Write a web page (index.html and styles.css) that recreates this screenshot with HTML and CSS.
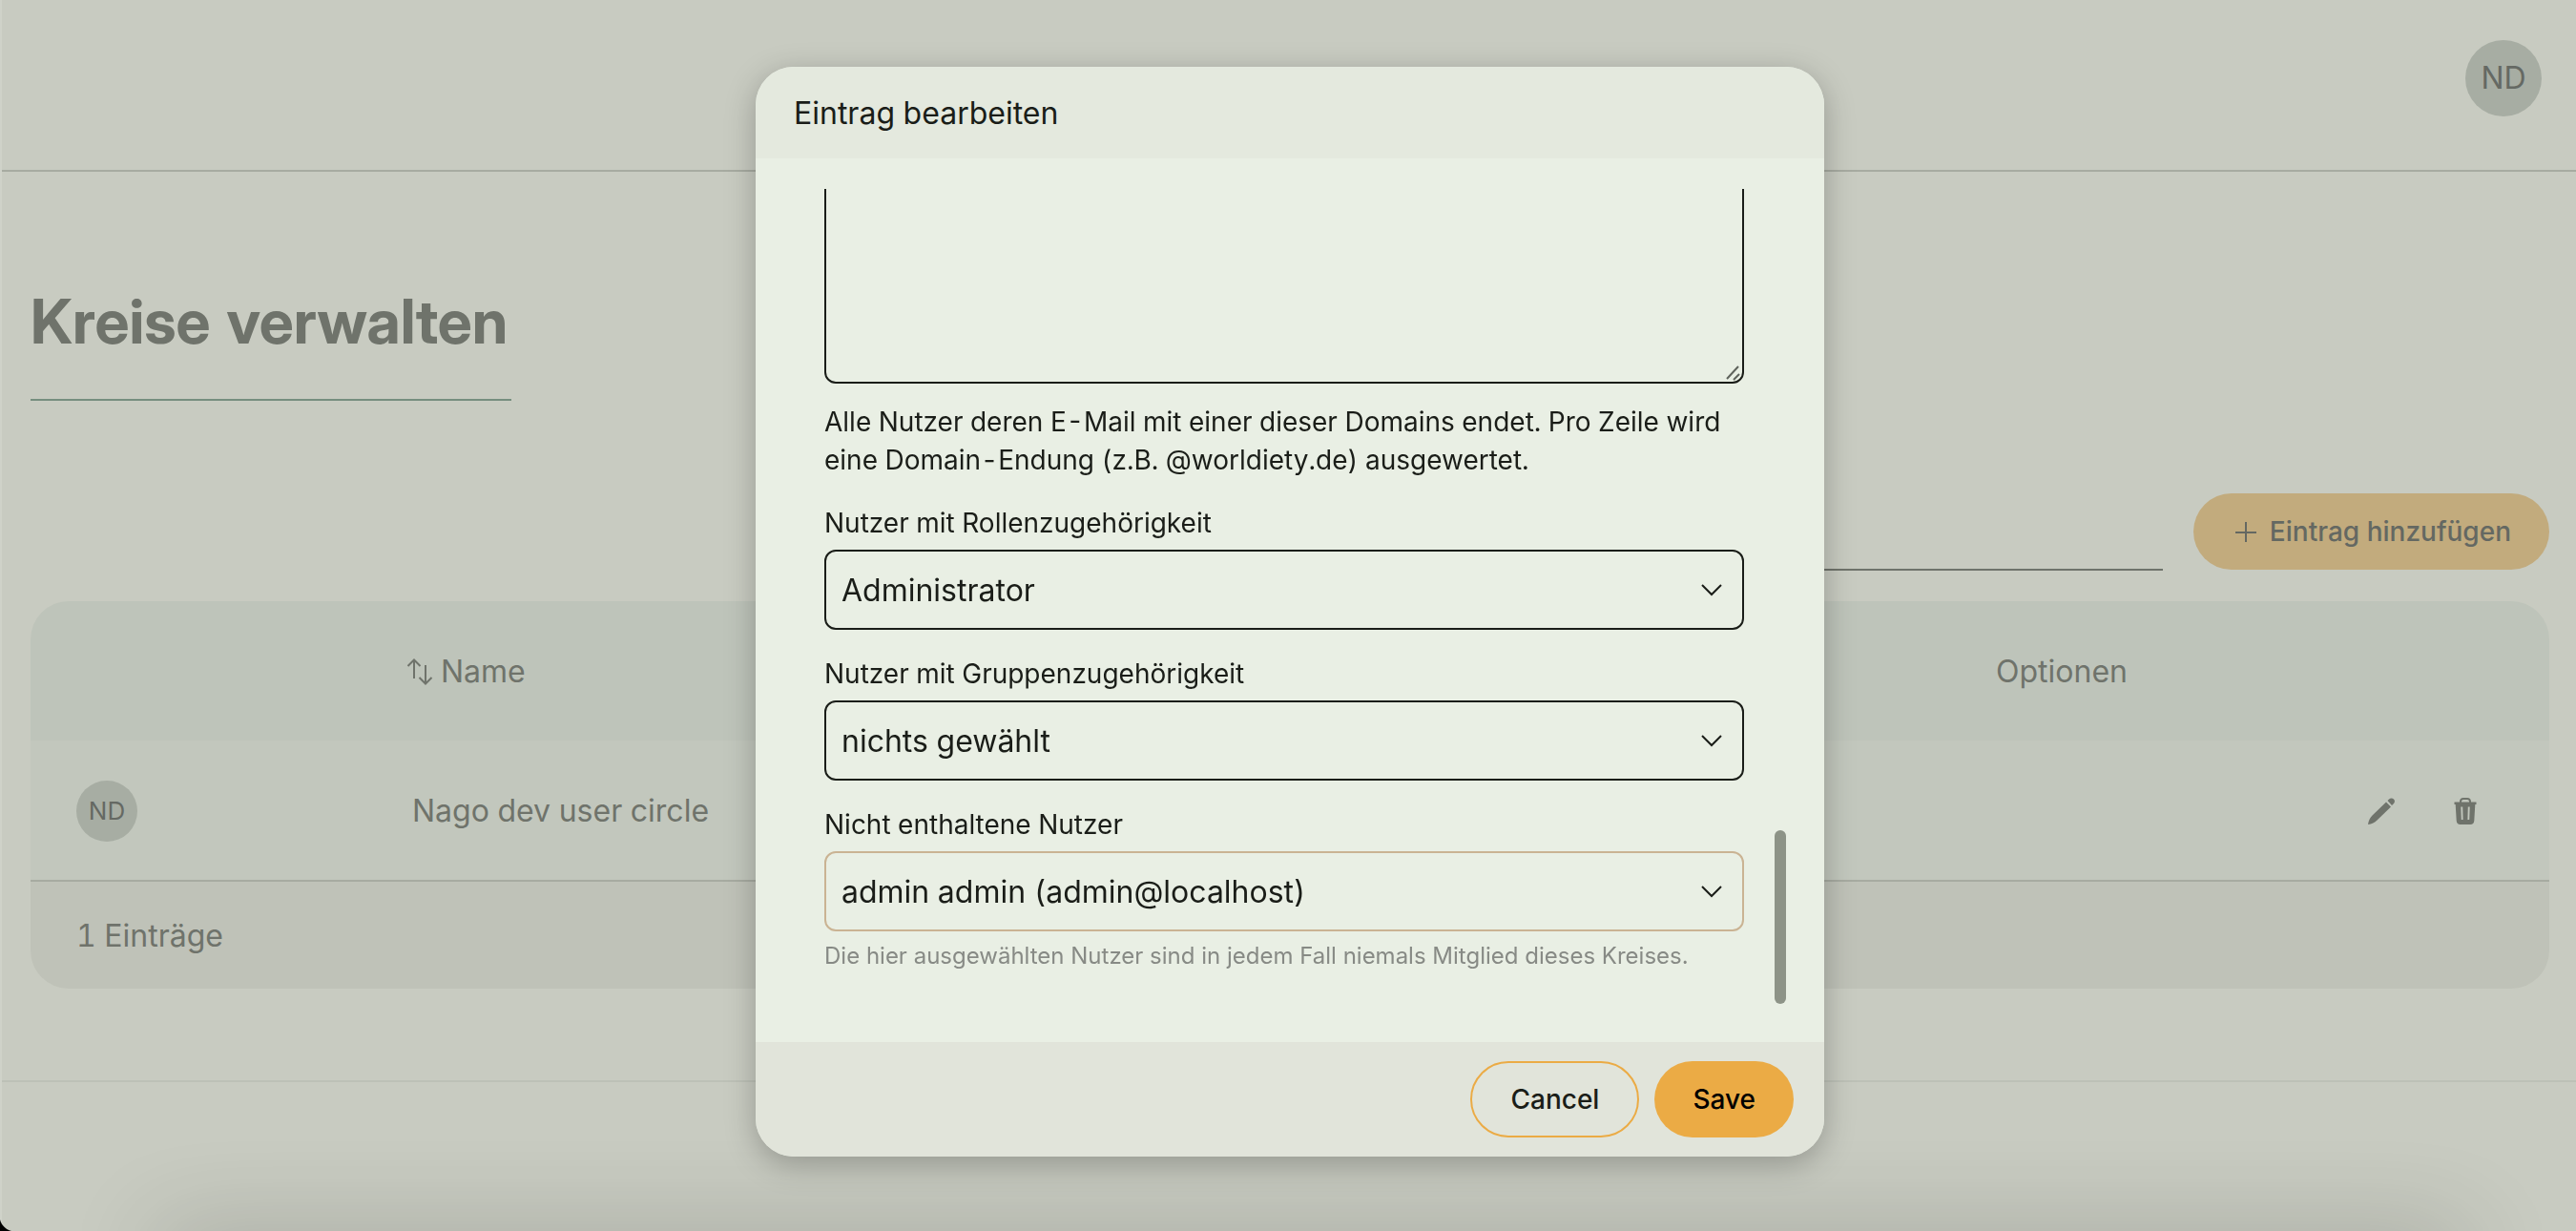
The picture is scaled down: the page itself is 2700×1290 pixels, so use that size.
FILE: index.html
```html
<!DOCTYPE html>
<html lang="de">
<head>
<meta charset="utf-8">
<title>Kreise verwalten</title>
<link rel="stylesheet" href="styles.css">
</head>
<body>
<div class="app">
  <header class="topbar">
    <button class="avatar avatar-large" type="button">ND</button>
  </header>

  <main class="content">
    <h1 class="page-title">Kreise verwalten</h1>

    <div class="toolbar">
      <input class="search" type="search" aria-label="Suchen">
      <button class="button button-add" type="button">
        <svg class="icon-plus" viewBox="0 0 28 28" aria-hidden="true"><path d="M15 4v21M4 15h22"/></svg>
        Eintrag hinzufügen
      </button>
    </div>

    <table class="entries">
      <colgroup><col class="col-avatar"><col class="col-name"><col class="col-options"></colgroup>
      <thead>
        <tr>
          <th></th>
          <th>
            <button class="sort" type="button">
              <svg class="icon-sort" viewBox="0 0 28 28" aria-hidden="true"><path d="M8 21V2M1.500 8L8 1.500L14.500 8M20 7v19M13.500 20L20 26.500L26.500 20"/></svg>
              Name
            </button>
          </th>
          <th>Optionen</th>
        </tr>
      </thead>
      <tbody>
        <tr>
          <td><span class="avatar avatar-small">ND</span></td>
          <td>Nago dev user circle</td>
          <td>
            <div class="row-actions">
              <button class="icon-button" type="button" aria-label="Bearbeiten">
                <svg class="icon-action" viewBox="0 0 28 28" aria-hidden="true"><path d="M19 4.500L24 9.500L9.500 23.500C7 26 4 27.500 0 28C.5 24 2 21 4.500 18.500ZM20.500 3L22 1.500C23.500 0 25.500 0 27 1.500S28 5 27 6L25 8Z"/></svg>
              </button>
              <button class="icon-button" type="button" aria-label="Löschen">
                <svg class="icon-action" viewBox="0 0 28 28" aria-hidden="true"><path fill-rule="evenodd" d="M8 4.500V4C8 1.500 9.500 0 12 0h4c2.500 0 4 1.500 4 4v.5h5.500v2.500H24.300L23.300 24c-.2 2.500-1.600 4-4 4H8.700c-2.400 0-3.800-1.500-4-4L3.700 7H2.500V4.500ZM10 4.500h8C18 2.700 17.200 2 16 2h-4c-1.200 0-2 .7-2 2.500ZM9.300 9.500l.5 13.500h1.800l-.4-13.500ZM16.800 9.500l-.4 13.500h1.800l.5-13.500Z"/></svg>
              </button>
            </div>
          </td>
        </tr>
      </tbody>
      <tfoot>
        <tr><td colspan="3">1 Einträge</td></tr>
      </tfoot>
    </table>
  </main>
  <footer class="page-footer"></footer>
</div>

<div class="edge-shade"></div>
<div class="window-corner"></div>

<div class="overlay">
  <section class="dialog" role="dialog" aria-modal="true" aria-labelledby="dialog-title">
    <h2 class="dialog-header" id="dialog-title">Eintrag bearbeiten</h2>
    <div class="dialog-body">
      <form class="fields" id="circle-form">
        <div class="field field-domains">
          <div class="picker">
            <textarea class="control domains" aria-describedby="domains-help" aria-label="Domains"></textarea>
            <svg class="grip" viewBox="0 0 16 16" aria-hidden="true"><path d="M1 14L13 1M8 15L14 9"/></svg>
          </div>
          <p class="help-large" id="domains-help">Alle Nutzer deren E-Mail mit einer dieser Domains endet. Pro Zeile wird eine Domain-Endung (z.B. @worldiety.de) ausgewertet.</p>
        </div>
        <div class="field">
          <label class="label" for="roles">Nutzer mit Rollenzugehörigkeit</label>
          <div class="picker">
            <select class="control select" id="roles"><option>Administrator</option></select>
            <svg class="chevron" viewBox="0 0 24 14" aria-hidden="true"><path d="M2 2l10 10L22 2"/></svg>
          </div>
        </div>
        <div class="field">
          <label class="label" for="groups">Nutzer mit Gruppenzugehörigkeit</label>
          <div class="picker">
            <select class="control select" id="groups"><option>nichts gewählt</option></select>
            <svg class="chevron" viewBox="0 0 24 14" aria-hidden="true"><path d="M2 2l10 10L22 2"/></svg>
          </div>
        </div>
        <div class="field">
          <label class="label" for="excluded">Nicht enthaltene Nutzer</label>
          <div class="picker">
            <select class="control select control-hover" id="excluded" aria-describedby="excluded-help"><option>admin admin (admin@localhost)</option></select>
            <svg class="chevron" viewBox="0 0 24 14" aria-hidden="true"><path d="M2 2l10 10L22 2"/></svg>
          </div>
          <p class="help" id="excluded-help">Die hier ausgewählten Nutzer sind in jedem Fall niemals Mitglied dieses Kreises.</p>
        </div>
      </form>
      <div class="scroll-track"><div class="scroll-thumb"></div></div>
    </div>
    <div class="dialog-footer">
      <button class="button button-cancel" type="button">Cancel</button>
      <button class="button button-save" type="submit" form="circle-form">Save</button>
    </div>
  </section>
</div>
</body>
</html>
```

FILE: styles.css
```css
:root {
  --page: #c8cbc1;
  --line: #a7aba1;
  --muted: #6f736b;
  --ink: #1a1d18;
  --amber: #ebab45;
}

* {
  box-sizing: border-box;
}

body {
  margin: 0;
  min-height: 100vh;
  overflow: hidden;
  background: var(--page);
  color: var(--muted);
  font: 400 32px/48px Inter, sans-serif;
  font-variant-numeric: tabular-nums;
}

button,
select,
input,
textarea {
  font: inherit;
  color: inherit;
}

button {
  padding: 0;
  border: 0;
  background: none;
}

svg {
  fill: none;
  stroke: currentColor;
  flex: none;
}

.app {
  min-height: 100vh;
  border-left: 2px solid #cfd2c9;
}

.topbar {
  display: flex;
  align-items: center;
  justify-content: flex-end;
  height: 180px;
  padding: 0 36px 14px;
  border-bottom: 2px solid var(--line);
}

.avatar {
  display: flex;
  align-items: center;
  justify-content: center;
  border-radius: 50%;
  background: #a7ada3;
  color: #656963;
}

.avatar-large {
  width: 80px;
  height: 80px;
}

.avatar-small {
  width: 64px;
  height: 64px;
  font-size: 26px;
}

.content {
  padding: 116px 28px 96px 30px;
}

.page-title {
  width: fit-content;
  margin: 0;
  padding: 0 4px 40px 0;
  border-bottom: 2px solid #768e7f;
  font-family: "Inter Display", Inter, sans-serif;
  font-size: 64px;
  font-weight: 700;
  line-height: 82px;
}

.toolbar {
  display: flex;
  justify-content: flex-end;
  gap: 32px;
  margin-top: 97px;
}

.search {
  width: 480px;
  height: 81px;
  padding: 0;
  border: 0;
  border-bottom: 2px solid var(--muted);
  background: none;
  outline: none;
}

.button {
  display: flex;
  align-items: center;
  gap: 12px;
  height: 80px;
  padding: 0 40px;
  border-radius: 40px;
  font-size: 28px;
  font-weight: 500;
}

.button-add {
  background: #c2ab7d;
  color: #646862;
}

.icon-plus {
  width: 28px;
  height: 28px;
  stroke-width: 2;
}

.entries {
  width: 100%;
  margin-top: 32px;
  border-spacing: 0;
  border-radius: 40px;
  overflow: hidden;
  table-layout: fixed;
  text-align: left;
}

.col-avatar {
  width: 352px;
}

.col-options {
  width: 628px;
}

.entries th,
.entries td {
  height: 146px;
  padding: 2px 48px 0;
  font-weight: 400;
}

.entries thead {
  background: #bec4ba;
}

.entries tbody {
  background: #c2c7bd;
}

.entries tfoot {
  background: #bfc2b8;
}

.entries tfoot td {
  height: 114px;
  border-top: 2px solid var(--line);
}

.sort {
  display: flex;
  align-items: center;
  gap: 8px;
  margin-left: -6px;
}

.icon-sort {
  width: 28px;
  height: 28px;
  stroke-width: 2;
}

.row-actions {
  display: flex;
  justify-content: flex-end;
  gap: 8px;
}

.icon-button {
  display: grid;
  place-items: center;
  width: 80px;
  height: 80px;
}

.icon-action {
  width: 28px;
  height: 28px;
  fill: currentColor;
  stroke: none;
}

.page-footer {
  border-top: 2px solid #bdc1b7;
}

/* soft shade cast along the lower window edge */
.edge-shade {
  position: fixed;
  right: 120px;
  bottom: -40px;
  left: 170px;
  height: 40px;
  box-shadow: 0 10px 100px 4px rgba(0, 0, 0, .24);
}

.window-corner {
  position: fixed;
  bottom: 0;
  left: 0;
  width: 16px;
  height: 16px;
  background: radial-gradient(circle at 100% 0, transparent 16px, #000 17px);
}

.overlay {
  position: fixed;
  inset: 0;
  display: flex;
  align-items: flex-start;
  justify-content: center;
  padding: 70px 0 78px 4px;
}

.dialog {
  display: flex;
  flex-direction: column;
  width: 1120px;
  max-width: 100%;
  height: 100%;
  border-radius: 40px;
  overflow: hidden;
  background: #e9efe4;
  color: var(--ink);
  box-shadow: 0 8px 32px rgba(0, 0, 0, .26);
}

.dialog-header {
  margin: 0;
  padding: 25px 40px 23px;
  background: #e4e9de;
  font-size: 32px;
  font-weight: 400;
}

.dialog-body {
  flex: 1;
  display: flex;
  min-height: 0;
  padding: 32px 40px;
}

.fields {
  flex: 1;
  display: flex;
  flex-direction: column;
  justify-content: flex-end;
  gap: 26px;
  padding: 0 32px 40px;
  overflow: hidden;
}

.field {
  display: flex;
  flex-direction: column;
  gap: 8px;
}

.field-domains {
  gap: 20px;
}

.label,
.help-large {
  margin: 0;
  font-size: 28px;
  line-height: 40px;
}

.help {
  margin: 0;
  color: #878a85;
  font-size: 24px;
  font-variant-numeric: normal;
  line-height: 36px;
}

.control {
  display: block;
  width: 100%;
  border: 2px solid var(--ink);
  border-radius: 12px;
  background: transparent;
  outline: none;
}

.control-hover {
  border-color: #cab393;
}

.domains {
  height: 320px;
  padding: 16px;
  resize: none;
}

.grip {
  position: absolute;
  right: 3px;
  bottom: 3px;
  width: 16px;
  height: 16px;
  stroke: #5f635c;
  stroke-width: 2;
  pointer-events: none;
}

.picker {
  position: relative;
}

.select {
  height: 84px;
  padding: 2px 64px 0 16px;
  appearance: none;
}

.chevron {
  position: absolute;
  top: 35px;
  right: 22px;
  width: 24px;
  height: 14px;
  stroke-width: 2;
  pointer-events: none;
}

.scroll-track {
  display: flex;
  flex-direction: column;
  justify-content: flex-end;
  width: 12px;
  padding-bottom: 8px;
}

.scroll-thumb {
  height: 182px;
  border-radius: 6px;
  background: #8d9387;
}

.dialog-footer {
  display: flex;
  justify-content: flex-end;
  gap: 16px;
  padding: 20px 32px;
  background: #e1e4da;
}

.button-cancel {
  border: 2px solid var(--amber);
}

.button-save {
  background: var(--amber);
  color: #000;
}
```
